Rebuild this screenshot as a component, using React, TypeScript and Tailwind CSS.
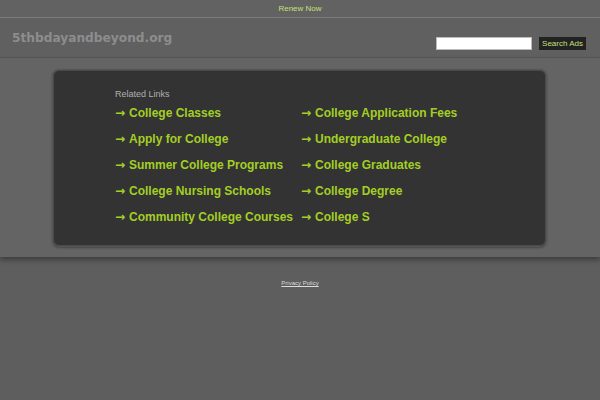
import React from 'react';

const leftLinks = [
  'College Classes',
  'Apply for College',
  'Summer College Programs',
  'College Nursing Schools',
  'Community College Courses',
];

const rightLinks = [
  'College Application Fees',
  'Undergraduate College',
  'College Graduates',
  'College Degree',
  'College S',
];

const LinkItem: React.FC<{ label: string }> = ({ label }) => (
  <a href="#" className="flex h-[26px] items-center whitespace-nowrap text-[12px] font-bold text-[#a3cf24]">
    <span className="w-[14px] font-['DejaVu_Sans',sans-serif] text-[12px] font-bold leading-none">→</span>
    {label}
  </a>
);

export default function App() {
  return (
    <div className="min-h-[400px] w-[600px] bg-[#5e5e5e] font-['Liberation_Sans',Arial,sans-serif]">
      {/* Top bar */}
      <div className="flex h-[18px] items-center justify-center border-b border-[#7c7c7c] bg-[#626262]">
        <a href="#" className="text-[8px] text-[#c4e07c]">Renew Now</a>
      </div>

      {/* Header */}
      <div className="flex h-[40px] items-center justify-between border-b border-[#575757] bg-[#606060] pl-[12px] pr-[14px]">
        <div className="pt-[1px] text-[12.2px] font-bold text-[#8d8d8d] font-['DejaVu_Sans',sans-serif]">
          5thbdayandbeyond.org
        </div>
        <div className="mt-[11px] flex items-center gap-[7px]">
          <input className="h-[13px] w-[96px] border border-[#bbb] bg-white" />
          <button className="h-[13px] bg-[#222] px-[3px] text-[8px] leading-[13px] text-[#c4e07c]">
            Search Ads
          </button>
        </div>
      </div>

      {/* Main band */}
      <div className="h-[199px] bg-[#646464] pt-[12px] shadow-[0_3px_5px_rgba(0,0,0,0.35)]">
        <div className="ml-[53px] mr-[54px] h-[176px] rounded-[6px] border border-[#4a4a4a] bg-[#333333] pl-[61px] pt-[17px] shadow-[0_0_0_1px_#565656,0_1px_3px_rgba(0,0,0,0.6)]">
          <div className="mb-[-2px] text-[9px] text-[#b0b0b0]">Related Links</div>
          <div className="flex">
            <div className="flex w-[186px] flex-col">
              {leftLinks.map((l) => (
                <LinkItem key={l} label={l} />
              ))}
            </div>
            <div className="flex flex-col">
              {rightLinks.map((l) => (
                <LinkItem key={l} label={l} />
              ))}
            </div>
          </div>
        </div>
      </div>

      {/* Footer */}
      <div className="flex justify-center pt-[22px]">
        <a href="#" className="text-[6px] text-[#dcdcdc] underline">Privacy Policy</a>
      </div>
    </div>
  );
}
